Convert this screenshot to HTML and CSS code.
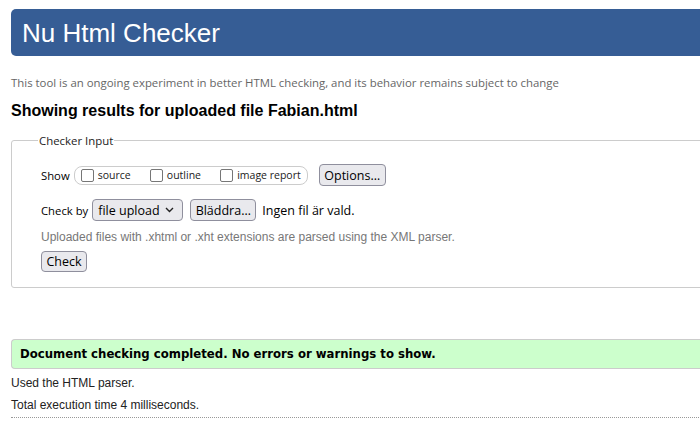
FILE: index.html
```html
<!DOCTYPE html>
<html lang="en">
<head>
<meta charset="utf-8">
<title>Nu Html Checker</title>
<link rel="stylesheet" href="styles.css">
</head>
<body>
<div class="page">
  <h1 class="banner">Nu Html Checker</h1>
  <p class="intro">This tool is an ongoing experiment in better HTML checking, and its behavior remains subject to change</p>
  <h2 class="results">Showing results for uploaded file Fabian.html</h2>
  <fieldset class="checker">
    <legend class="legend">Checker Input</legend>
    <div class="row show-row">
      <span class="label">Show</span>
      <span class="pill">
        <label class="opt"><span class="box"></span>source</label>
        <label class="opt"><span class="box"></span>outline</label>
        <label class="opt"><span class="box"></span>image report</label>
      </span>
      <span class="btn options">Options…</span>
    </div>
    <div class="row checkby-row">
      <span class="label">Check by</span>
      <span class="btn select">file upload
        <svg class="chev" width="9" height="6" viewBox="0 0 9 6"><path d="M1 1 L4.5 4.5 L8 1" fill="none" stroke="#222" stroke-width="1.4"/></svg>
      </span>
      <span class="btn browse">Bläddra…</span>
      <span class="nofile">Ingen fil är vald.</span>
    </div>
    <p class="hint">Uploaded files with .xhtml or .xht extensions are parsed using the XML parser.</p>
    <span class="btn check">Check</span>
  </fieldset>
  <div class="success">Document checking completed. No errors or warnings to show.</div>
  <p class="meta">Used the HTML parser.</p>
  <p class="meta meta-last">Total execution time 4 milliseconds.</p>
  <div class="rule"></div>
</div>
</body>
</html>
```
FILE: styles.css
```css
html, body {
  margin: 0;
  padding: 0;
  overflow: hidden;
  background: #fff;
}
.page {
  width: 740px;
  padding: 9px 0 0 11px;
  font-family: "Liberation Sans", Arial, sans-serif;
  color: #000;
}
.banner {
  margin: 0;
  height: 47px;
  box-sizing: border-box;
  background: #365d95;
  color: #fff;
  border-radius: 5px;
  font-family: "Liberation Sans", Arial, sans-serif;
  font-weight: normal;
  font-size: 26px;
  line-height: 48px;
  padding-left: 11px;
}
.intro {
  margin: 19px 0 0;
  font-family: "Open Sans", sans-serif;
  font-size: 11.4px;
  line-height: 16px;
  color: #666;
}
.results {
  margin: 10px 0 0;
  font-size: 16px;
  font-weight: bold;
  line-height: 20px;
}
.checker {
  margin: 12px 0 0;
  border: 1px solid #ccc;
  border-radius: 3px;
  padding: 16px 0 15px 29px;
  min-width: 0;
}
.legend {
  padding: 0 1px;
  margin-left: -3px;
  font-family: "Open Sans", sans-serif;
  font-size: 11.4px;
  color: #222;
}
.row {
  display: flex;
  align-items: center;
  font-family: "Open Sans", sans-serif;
  font-size: 11.3px;
}
.label {
  margin-right: 4px;
}
.pill {
  display: inline-flex;
  align-items: center;
  height: 19px;
  box-sizing: border-box;
  border: 1px solid #ccc;
  border-radius: 8px;
  padding: 0 6px 0 6px;
  width: 234px;
  justify-content: space-between;
}
.opt {
  display: inline-flex;
  align-items: center;
  font-size: 10.5px;
  color: #222;
}
.box {
  width: 13px;
  height: 13px;
  box-sizing: border-box;
  border: 1px solid #767676;
  border-radius: 2px;
  margin-right: 4px;
}
.btn {
  display: inline-flex;
  align-items: center;
  justify-content: center;
  box-sizing: border-box;
  height: 22px;
  padding: 0 5px;
  background: #e9e9ed;
  border: 1px solid #8f8f9d;
  border-radius: 4px;
  font-family: "Open Sans", sans-serif;
  font-size: 12.5px;
  color: #000;
}
.options {
  margin-left: 11px;
  width: 67px;
}
.checkby-row {
  margin-top: 13px;
}
.select {
  width: 91px;
  justify-content: space-between;
  margin-right: 7px;
}
.chev {
  margin-right: 3px;
}
.browse {
  width: 66px;
}
.nofile {
  margin-left: 6px;
  font-size: 12.5px;
}
.hint {
  margin: 8px 0 6px;
  font-size: 12px;
  color: #777;
  line-height: 16px;
}
.check {
  width: 46px;
  height: 21px;
}
.success {
  margin-top: 51px;
  height: 30px;
  box-sizing: border-box;
  background: #ccffcc;
  border: 1px solid #ccc;
  border-right: none;
  border-radius: 4px 0 0 4px;
  font-family: "DejaVu Sans", Verdana, sans-serif;
  font-stretch: semi-condensed;
  font-weight: bold;
  font-size: 13px;
  line-height: 28px;
  padding-left: 8px;
}
.meta {
  margin: 6px 0 0;
  font-size: 12px;
  line-height: 16px;
  color: #222;
}
.meta-last {
  margin-top: 6px;
}
.rule {
  margin-top: 4px;
  border-top: 1px dotted #999;
}
```
